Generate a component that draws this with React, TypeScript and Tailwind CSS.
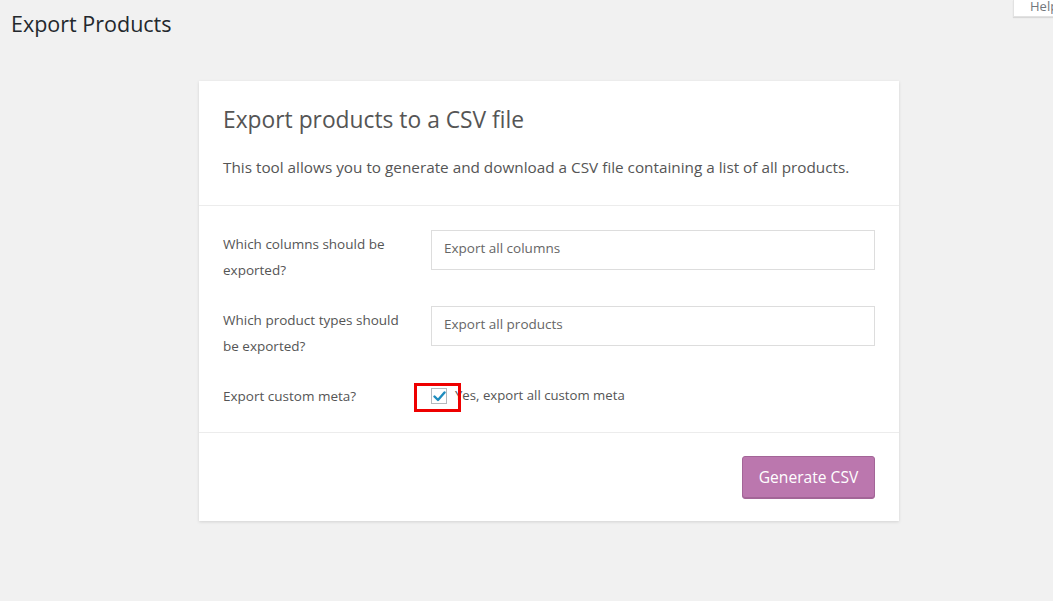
import React from "react";

export default function App() {
  return (
    <div
      className="min-h-[601px] w-full bg-[#f1f1f1] relative overflow-hidden"
      style={{ fontFamily: '"Open Sans", "Noto Sans", sans-serif' }}
    >
      <div className="absolute right-[-20px] top-0 h-[17px] w-[60px] bg-white shadow-[0_1px_1px_rgba(0,0,0,0.1)] border-x border-b border-[#e2e2e2] pl-[16px] text-[13px] leading-[12px] text-[#72777c]">
        Help
      </div>
      <h1 className="pl-[11px] pt-[9px] text-[21.5px] leading-[29px] text-[#23282d] font-normal">
        Export Products
      </h1>
      <div className="pl-[199px] pt-[43px]">
        <div className="w-[700px] bg-white shadow-[0_1px_3px_rgba(0,0,0,0.13)]">
          <div className="px-[24px] pt-[24px] pb-[26px] border-b border-[#ececec]">
            <h2 className="text-[22.8px] leading-[30px] text-[#555] font-normal">
              Export products to a CSV file
            </h2>
            <p className="mt-[20px] text-[15.3px] leading-[24px] text-[#555]">
              This tool allows you to generate and download a CSV file containing a list of all products.
            </p>
          </div>
          <div className="px-[24px] pt-[24px] pb-[23px] border-b border-[#ececec] text-[13.5px] text-[#555]">
            <div className="flex">
              <div className="w-[208px] pr-[20px] leading-[26px] pt-[1px]">Which columns should be exported?</div>
              <div className="flex-1 h-[40px] border border-[#dddddd] flex items-center px-[12px] pb-[3px] text-[#666]">
                Export all columns
              </div>
            </div>
            <div className="flex mt-[23px]">
              <div className="w-[208px] pr-[20px] leading-[26px] pt-[1px]">Which product types should be exported?</div>
              <div className="flex-1 h-[40px] border border-[#dddddd] flex items-center px-[12px] pb-[3px] text-[#666]">
                Export all products
              </div>
            </div>
            <div className="flex items-center mt-[24px] h-[26px]">
              <div className="w-[208px]">Export custom meta?</div>
              <div className="relative w-[16px] h-[16px]">
                <div className="w-[16px] h-[16px] border border-[#b4b9be] bg-white flex items-center justify-center">
                  <svg width="13" height="11" viewBox="0 0 13 11">
                    <path d="M1.5 5.5 L5 9 L11.5 1.5" fill="none" stroke="#1e8cbe" strokeWidth="2.4" strokeLinecap="round" strokeLinejoin="round" />
                  </svg>
                </div>
                <div className="absolute left-[-17px] top-[-5px] w-[47px] h-[29px] border-[3px] border-[#ee0000]" />
              </div>
              <span className="ml-[8px] text-[13.2px] text-[#555]">Yes, export all custom meta</span>
            </div>
          </div>
          <div className="flex justify-end px-[24px] pt-[23px] pb-[22px]">
            <button className="h-[43px] w-[133px] rounded-[3px] bg-[#bb77ae] border border-[#a36597] text-white text-[15.6px] shadow-[inset_0_-1px_0_#a36597]">
              Generate CSV
            </button>
          </div>
        </div>
      </div>
    </div>
  );
}
